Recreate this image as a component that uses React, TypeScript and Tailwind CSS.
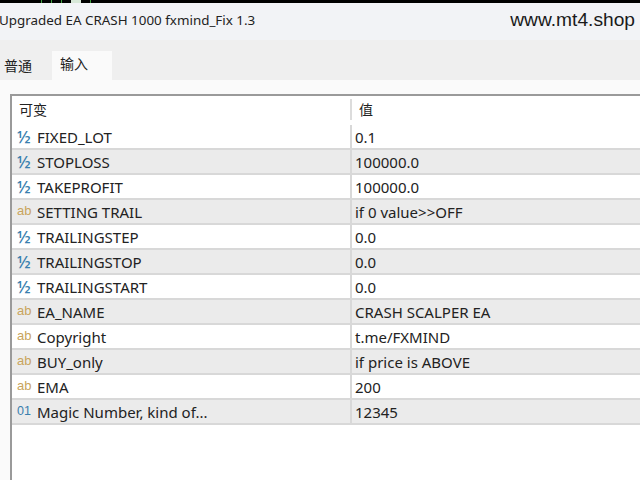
const ROWS = [
  { icon: "half", name: "FIXED_LOT", value: "0.1" },
  { icon: "half", name: "STOPLOSS", value: "100000.0" },
  { icon: "half", name: "TAKEPROFIT", value: "100000.0" },
  { icon: "ab", name: "SETTING TRAIL", value: "if 0 value>>OFF" },
  { icon: "half", name: "TRAILINGSTEP", value: "0.0" },
  { icon: "half", name: "TRAILINGSTOP", value: "0.0" },
  { icon: "half", name: "TRAILINGSTART", value: "0.0" },
  { icon: "ab", name: "EA_NAME", value: "CRASH SCALPER EA" },
  { icon: "ab", name: "Copyright", value: "t.me/FXMIND" },
  { icon: "ab", name: "BUY_only", value: "if price is ABOVE" },
  { icon: "ab", name: "EMA", value: "200" },
  { icon: "01", name: "Magic Number, kind of...", value: "12345" },
];

function TypeIcon({ type }: { type: string }) {
  if (type === "half") {
    return <span className="w-[20px] pb-[1px] text-[17px] leading-none font-medium text-[#3a7fae]">½</span>;
  }
  if (type === "ab") {
    return <span className="w-[20px] pb-[2px] font-['Liberation_Sans',sans-serif] text-[13px] leading-none text-[#c9a45c]">ab</span>;
  }
  return <span className="w-[20px] pb-[1px] font-['Liberation_Sans',sans-serif] text-[12.5px] leading-none text-[#3a7fae]">01</span>;
}

export default function App() {
  return (
    <div className="flex h-[480px] w-[640px] flex-col overflow-hidden bg-[#fafafa] font-['Noto_Sans','Noto_Sans_CJK_SC',sans-serif] text-[15px] text-[#222]">
      {/* Top edge of the chart behind the dialog */}
      <div className="flex h-[3px] shrink-0 gap-[9px] bg-black pl-[41px]">
        <div className="w-px bg-[#3f9f3f]" />
        <div className="w-px bg-[#3f9f3f]" />
        <div className="w-px bg-[#3f9f3f]" />
        <div className="w-[10px] bg-[#d8e8d8]" />
        <div className="w-px bg-[#3f9f3f]" />
      </div>

      {/* Title */}
      <div className="flex h-[37px] shrink-0 items-center justify-between bg-[#f2f3f6] pb-[2px] pr-[5px]">
        <span className="-ml-[1px] text-[13.4px]">Upgraded EA CRASH 1000 fxmind_Fix 1.3</span>
        <span className="font-['Liberation_Sans',sans-serif] text-[19.2px] text-[#1a1a1a]">www.mt4.shop</span>
      </div>

      {/* Tabs */}
      <div className="flex h-[40px] shrink-0 items-end bg-[#efefef] text-[14px]">
        <div className="flex h-[29px] w-[52px] items-center pl-[4px]">普通</div>
        <div className="flex h-[29px] w-[60px] items-center bg-[#fafafa] pb-[4px] pl-[8px]">输入</div>
      </div>

      {/* Inputs table */}
      <div className="flex flex-1 flex-col pl-[10px] pt-[14px]">
        <div className="flex-1 border-l-2 border-t-2 border-[#9a9a9a] bg-white">
          <div className="flex h-[29px] items-center pb-[3px] text-[14px]">
            <div className="w-[340px] border-r-2 border-[#dcdcdc] pl-[7px]">可变</div>
            <div className="pl-[7px]">值</div>
          </div>
          {ROWS.map((row, i) => (
            <div
              key={row.name}
              className={`flex h-[25px] items-center border-b-2 border-[#d8d8d8] ${i % 2 === 1 ? "bg-[#ebebeb]" : "bg-white"}`}
            >
              <div className="flex h-full w-[340px] items-center border-r-2 border-[#d8d8d8] pl-[5px]">
                <TypeIcon type={row.icon} />
                <span className="pt-[1px]">{row.name}</span>
              </div>
              <div className="pl-[3px] pt-[1px]">{row.value}</div>
            </div>
          ))}
        </div>
      </div>
    </div>
  );
}
